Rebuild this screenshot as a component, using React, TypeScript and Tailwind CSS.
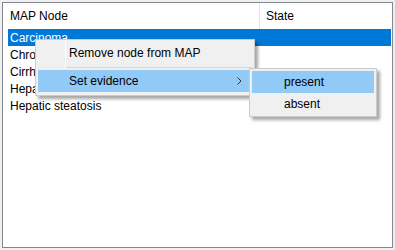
import React from "react";

const rows = ["Carcinoma", "Chronic hepatitis", "Cirrhosis", "Hepatitis", "Hepatic steatosis"];

function Chevron() {
  return (
    <svg width="5" height="8" viewBox="0 0 5 8" className="block">
      <polyline points="0.5,0.5 4,4 0.5,7.5" fill="none" stroke="#333" strokeWidth="1" />
    </svg>
  );
}

export default function App() {
  return (
    <div className="relative w-[395px] h-[250px] bg-[#f0f0f0] p-[2px] font-['Liberation_Sans',Arial,sans-serif] text-[12px] text-black overflow-hidden">
      {/* List view */}
      <div className="w-[391px] h-[246px] border border-[#828790] bg-white">
        <div className="flex h-[26px] items-center">
          <div className="w-[257px] h-full pl-[7px] flex items-center border-r border-[#e5e5e5]">MAP Node</div>
          <div className="pl-[6px]">State</div>
        </div>
        <div className="ml-[5px] mr-[1px]">
          {rows.map((r, i) => (
            <div
              key={r}
              className={`h-[17px] pl-[2px] flex items-center ${i === 0 ? "bg-[#0078d7] text-white" : ""}`}
            >
              {r}
            </div>
          ))}
        </div>
      </div>

      {/* Context menu */}
      <div className="absolute left-[35px] top-[39px] w-[220px] h-[57px] bg-[#f0f0f0] border border-[#cccccc] shadow-[3px_3px_3px_rgba(0,0,0,0.35)] pt-[2px]">
        <div className="absolute left-[29px] top-[1px] h-[27px] w-px bg-white" />
        <div className="h-[22px] flex items-center pl-[33px]">Remove node from MAP</div>
        <div className="h-[6px] pt-[3px] pl-[30px] pr-[2px]">
          <div className="h-px bg-[#d7d7d7]" />
        </div>
        <div className="h-[22px] mx-[2px] bg-[#91c9f7] flex items-center pl-[31px] pr-[10px] justify-between">
          <span>Set evidence</span>
          <Chevron />
        </div>
      </div>

      {/* Submenu */}
      <div className="absolute left-[249px] top-[68px] w-[128px] h-[49px] bg-[#f0f0f0] border border-[#cccccc] shadow-[3px_3px_3px_rgba(0,0,0,0.35)] pt-[2px]">
        <div className="h-[22px] mx-[2px] bg-[#91c9f7] flex items-center pl-[32px]">present</div>
        <div className="h-[22px] mx-[2px] flex items-center pl-[32px]">absent</div>
      </div>
    </div>
  );
}
